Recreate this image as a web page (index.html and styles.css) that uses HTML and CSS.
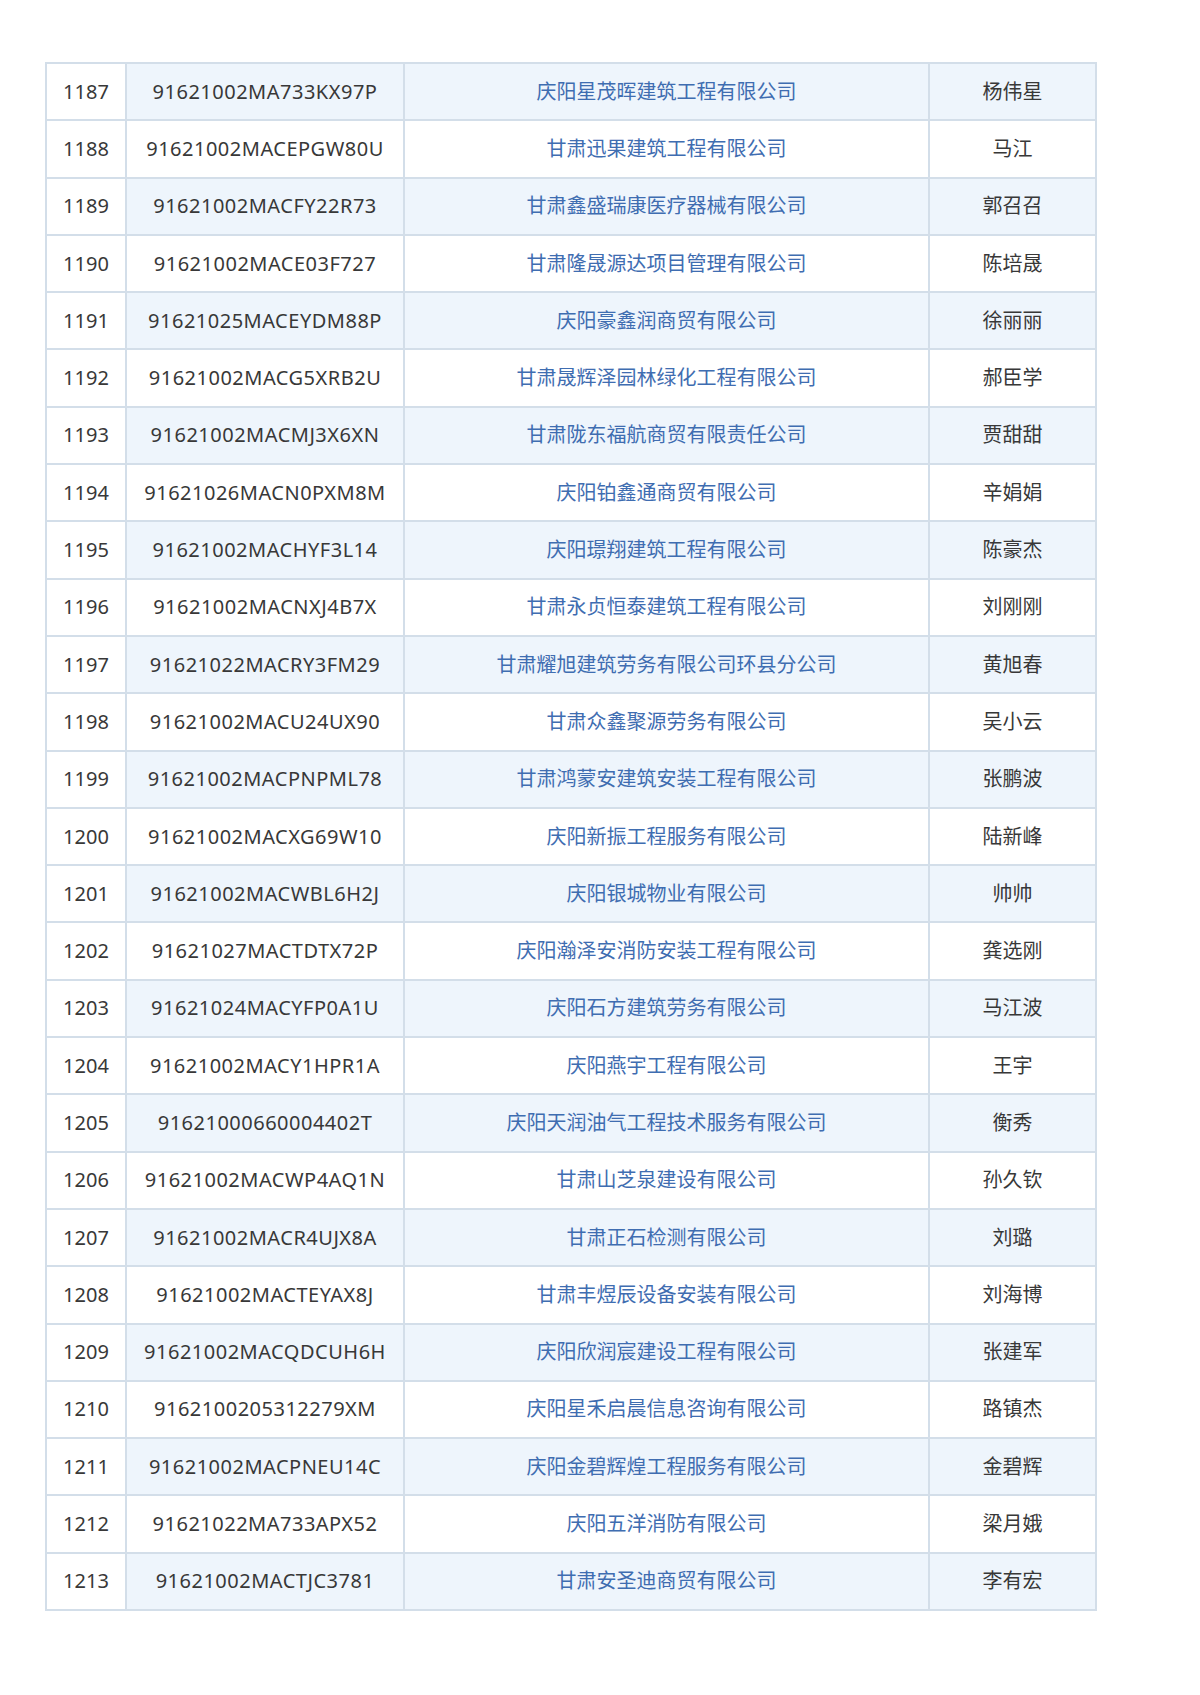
FILE: index.html
```html
<!DOCTYPE html>
<html lang="zh-CN">
<head>
<meta charset="utf-8">
<title>名单</title>
<link rel="stylesheet" href="styles.css">
</head>
<body>
<table class="list">
<colgroup><col class="c-no"><col class="c-code"><col class="c-name"><col class="c-person"></colgroup>
<tbody>
<tr><td>1187</td><td>91621002MA733KX97P</td><td class="co">庆阳星茂晖建筑工程有限公司</td><td>杨伟星</td></tr>
<tr><td>1188</td><td>91621002MACEPGW80U</td><td class="co">甘肃迅果建筑工程有限公司</td><td>马江</td></tr>
<tr><td>1189</td><td>91621002MACFY22R73</td><td class="co">甘肃鑫盛瑞康医疗器械有限公司</td><td>郭召召</td></tr>
<tr><td>1190</td><td>91621002MACE03F727</td><td class="co">甘肃隆晟源达项目管理有限公司</td><td>陈培晟</td></tr>
<tr><td>1191</td><td>91621025MACEYDM88P</td><td class="co">庆阳豪鑫润商贸有限公司</td><td>徐丽丽</td></tr>
<tr><td>1192</td><td>91621002MACG5XRB2U</td><td class="co">甘肃晟辉泽园林绿化工程有限公司</td><td>郝臣学</td></tr>
<tr><td>1193</td><td>91621002MACMJ3X6XN</td><td class="co">甘肃陇东福航商贸有限责任公司</td><td>贾甜甜</td></tr>
<tr><td>1194</td><td>91621026MACN0PXM8M</td><td class="co">庆阳铂鑫通商贸有限公司</td><td>辛娟娟</td></tr>
<tr><td>1195</td><td>91621002MACHYF3L14</td><td class="co">庆阳璟翔建筑工程有限公司</td><td>陈豪杰</td></tr>
<tr><td>1196</td><td>91621002MACNXJ4B7X</td><td class="co">甘肃永贞恒泰建筑工程有限公司</td><td>刘刚刚</td></tr>
<tr><td>1197</td><td>91621022MACRY3FM29</td><td class="co">甘肃耀旭建筑劳务有限公司环县分公司</td><td>黄旭春</td></tr>
<tr><td>1198</td><td>91621002MACU24UX90</td><td class="co">甘肃众鑫聚源劳务有限公司</td><td>吴小云</td></tr>
<tr><td>1199</td><td>91621002MACPNPML78</td><td class="co">甘肃鸿蒙安建筑安装工程有限公司</td><td>张鹏波</td></tr>
<tr><td>1200</td><td>91621002MACXG69W10</td><td class="co">庆阳新振工程服务有限公司</td><td>陆新峰</td></tr>
<tr><td>1201</td><td>91621002MACWBL6H2J</td><td class="co">庆阳银城物业有限公司</td><td>帅帅</td></tr>
<tr><td>1202</td><td>91621027MACTDTX72P</td><td class="co">庆阳瀚泽安消防安装工程有限公司</td><td>龚选刚</td></tr>
<tr><td>1203</td><td>91621024MACYFP0A1U</td><td class="co">庆阳石方建筑劳务有限公司</td><td>马江波</td></tr>
<tr><td>1204</td><td>91621002MACY1HPR1A</td><td class="co">庆阳燕宇工程有限公司</td><td>王宇</td></tr>
<tr><td>1205</td><td>91621000660004402T</td><td class="co">庆阳天润油气工程技术服务有限公司</td><td>衡秀</td></tr>
<tr><td>1206</td><td>91621002MACWP4AQ1N</td><td class="co">甘肃山芝泉建设有限公司</td><td>孙久钦</td></tr>
<tr><td>1207</td><td>91621002MACR4UJX8A</td><td class="co">甘肃正石检测有限公司</td><td>刘璐</td></tr>
<tr><td>1208</td><td>91621002MACTEYAX8J</td><td class="co">甘肃丰煜辰设备安装有限公司</td><td>刘海博</td></tr>
<tr><td>1209</td><td>91621002MACQDCUH6H</td><td class="co">庆阳欣润宸建设工程有限公司</td><td>张建军</td></tr>
<tr><td>1210</td><td>9162100205312279XM</td><td class="co">庆阳星禾启晨信息咨询有限公司</td><td>路镇杰</td></tr>
<tr><td>1211</td><td>91621002MACPNEU14C</td><td class="co">庆阳金碧辉煌工程服务有限公司</td><td>金碧辉</td></tr>
<tr><td>1212</td><td>91621022MA733APX52</td><td class="co">庆阳五洋消防有限公司</td><td>梁月娥</td></tr>
<tr><td>1213</td><td>91621002MACTJC3781</td><td class="co">甘肃安圣迪商贸有限公司</td><td>李有宏</td></tr>
</tbody>
</table>
</body>
</html>
```
FILE: styles.css
```css
html, body {
  margin: 0;
  padding: 0;
  background: #ffffff;
}
body {
  padding: 62px 0 0 45px;
  font-family: "Noto Sans", "Noto Sans CJK SC", sans-serif;
}
.list {
  border-collapse: collapse;
  width: 1050px;
  table-layout: fixed;
  font-size: 20px;
  color: #383838;
}
.c-no { width: 80px; }
.c-code { width: 278px; }
.c-name { width: 525px; }
.c-person { width: 167px; }
.list td {
  border: 2px solid #d3dee9;
  height: 55.3px;
  padding: 0;
  text-align: center;
  vertical-align: middle;
  line-height: 1;
}
.list td:nth-child(2) {
  letter-spacing: 0.5px;
}
.list tr:nth-child(odd) td:not(:first-child) {
  background: #eef5fc;
}
.list td.co {
  color: #3f6db1;
}
```
